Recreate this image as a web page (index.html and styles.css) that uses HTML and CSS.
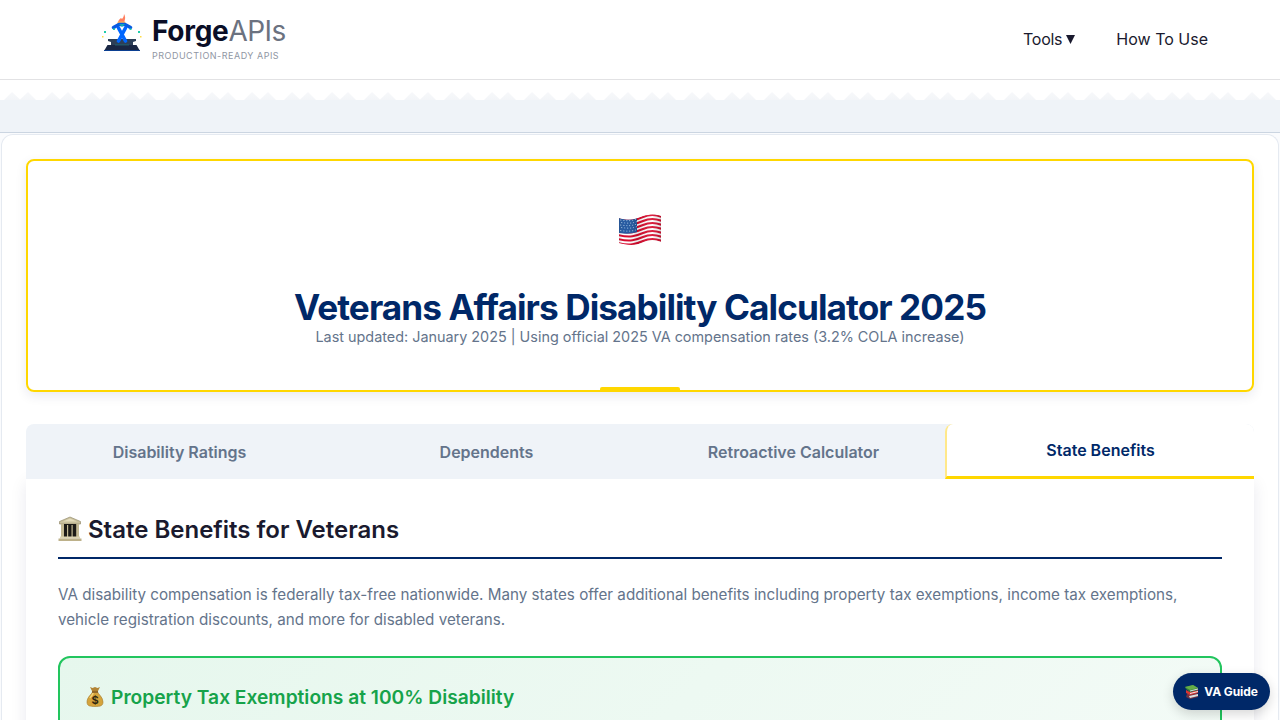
FILE: index.html
```html
<!DOCTYPE html>
<html lang="en">
<head>
<meta charset="utf-8">
<title>Veterans Affairs Disability Calculator 2025</title>
<link rel="stylesheet" href="styles.css">
</head>
<body>
<header class="header">
  <div class="brand">
    <svg class="brand-icon" viewBox="0 0 44 40" width="44" height="40">
      <path d="M7.500 31h29l3.500 6H4z" fill="#1a2744"/>
      <path d="M4 36h36v1H4z" fill="#0b3f91"/>
      <path d="M8 25h28v2l-3 1v3H11v-3l-3-1z" fill="#2d3f58"/>
      <path d="M15 30h14v1.500H15z" fill="#245566"/>
      <path d="M18 9c0-3 2-4 3-5l1 1c1-1 2-3 2-5 2 4 1 5 0 9z" fill="#ff8060"/>
      <path d="M18 7.500h7l1 2.500h-9z" fill="#ffb45c"/>
      <g fill="none" stroke="#0066ff" stroke-linecap="round" stroke-linejoin="round" stroke-width="3.600">
        <path d="M18.500 27l7-13M25.500 27l-7-13"/>
        <path d="M13.500 13.500l5.500-3h6l5.500 3" stroke="#075be3"/>
      </g>
      <path d="M19 10h6l-3 3z" fill="#10a9b5"/>
      <path d="M13 14.500h2v1.500h-2zM29.500 14.500h2v1.500h-2zM4 17h2v2H4zM38 17h2v2h-2z" fill="#20ccaa"/>
      <path d="M2 22h1.500v1.500H2zM40 22h1.500v1.500H40z" fill="#ffdc45"/>
    </svg>
    <div class="brand-copy">
      <div class="brand-name"><b>Forge</b><span>APIs</span></div>
      <div class="brand-tagline">PRODUCTION-READY APIS</div>
    </div>
  </div>
  <nav class="nav"><a>Tools <svg width="9" height="9" viewBox="0 0 9 9"><path d="M0 0h9L4.500 9z" fill="#1a1a2e"/></svg></a><a>How To Use</a></nav>
</header>
<div class="divider">
  <svg class="teeth" width="1280" height="8">
    <defs>
      <linearGradient id="fade" x1="0" y1="0" x2="0" y2="1"><stop stop-color="#f7f8fa"/><stop offset="1" stop-color="#f3f5f8"/></linearGradient>
      <pattern id="saw" width="40" height="8" patternUnits="userSpaceOnUse"><path d="M4 8l8-8 8 7.500L28 0l8 8z" fill="url(#fade)"/></pattern>
    </defs>
    <rect width="1280" height="8" fill="url(#saw)"/>
  </svg>
</div>
<div class="band"></div>
<main class="container">
  <section class="hero">
    <svg class="flag" width="44" height="32" viewBox="0 0 44 32">
      <defs>
        <clipPath id="flag-shape"><path d="M1 4C12 7 18 5 25 2 32 0 38 0 43 2v26c-7-2-12-2-19 1-8 3-16 2-23 0z"/></clipPath>
        <linearGradient id="flag-light"><stop stop-color="#000" stop-opacity=".12"/><stop offset=".15" stop-color="#fff" stop-opacity="0"/><stop offset=".42" stop-color="#000" stop-opacity=".1"/><stop offset=".75" stop-color="#fff" stop-opacity=".1"/><stop offset="1" stop-color="#000" stop-opacity=".18"/></linearGradient>
      </defs>
      <g clip-path="url(#flag-shape)">
        <path d="M0 0h44v32H0z" fill="#fff"/>
        <g fill="none" stroke="#d8092c" stroke-width="2.050">
          <path d="M0 5C12 8 18 6 25 3s14-2 19 0"/>
          <path d="M0 9C12 12 18 10 25 7s14-2 19 0"/>
          <path d="M0 13C12 16 18 14 25 11s14-2 19 0"/>
          <path d="M0 17C12 20 18 18 25 15s14-2 19 0"/>
          <path d="M0 21C12 24 18 22 25 19s14-2 19 0"/>
          <path d="M0 25C12 28 18 26 25 23s14-2 19 0"/>
          <path d="M0 29C12 32 18 30 25 27s14-2 19 0"/>
        </g>
        <path d="M1 4c8 2 13 2 18 0v14c-6 2-11 2-18 1z" fill="#2459a0"/>
        <g fill="none" stroke="#8fb2d8" stroke-dasharray="1.200 1.800" stroke-width="1">
          <path d="M2 6c7 1 12 1 17-1M3 8.500c7 1 11 1 16-1M2 11c7 1 12 1 17-1M3 13.500c7 1 11 1 16-1M2 16.500c7 1 12 1 17-1"/>
        </g>
        <path d="M0 0h44v32H0z" fill="url(#flag-light)"/>
      </g>
    </svg>
    <h1 class="title">Veterans Affairs Disability Calculator 2025</h1>
    <p class="updated">Last updated: January 2025 | Using official 2025 VA compensation rates (3.2% COLA increase)</p>
    <i class="hero-accent"></i>
  </section>
  <div class="tabs">
    <button class="tab">Disability Ratings</button><button class="tab">Dependents</button><button class="tab">Retroactive Calculator</button><button class="tab tab-active">State Benefits</button>
  </div>
  <section class="panel">
    <h2 class="panel-title">
      <svg width="24" height="26" viewBox="0 0 24 26">
        <path d="M12 1L1.500 5.500V8h21V5.500z" fill="#c9c09d" stroke="#968e70" stroke-width=".7"/>
        <path d="M5 5.500l7-3 7 3z" fill="#e4dcbc"/>
        <path d="M3.500 8h17v13h-17z" fill="#1c1a17"/>
        <path d="M3 8h3v13H3zM9 9h1.200v12H9zM13.500 9h1.200v12h-1.200zM18.200 8H21v13h-2.800z" fill="#c4b994"/>
        <path d="M2 20.500h20v2H2z" fill="#ded5b4"/><path d="M.5 22.500h23V25H.5z" fill="#bdb18a"/>
      </svg>
      <span>State Benefits for Veterans</span>
    </h2>
    <p class="intro">VA disability compensation is federally tax-free nationwide. Many states offer additional benefits including property tax exemptions, income tax exemptions, vehicle registration discounts, and more for disabled veterans.</p>
    <div class="benefit">
      <h3 class="benefit-title">
        <svg width="18" height="22" viewBox="0 0 18 22">
          <path d="M4 1l2.500 1L9 1l2.500 1L14 1l-2.500 5h-5z" fill="#b28435"/>
          <path d="M7 5h4c1 3 6 6 6 11 0 4-3 4.500-8 4.500S1 20 1 16C1 11 6 8 7 5z" fill="#d5a43c" stroke="#a57a2c" stroke-width=".6"/>
          <path d="M4 12c1-2 3-3 3-5" stroke="#f2d477" stroke-width="1.500" fill="none"/>
          <path d="M6 6h6" stroke="#805922" stroke-width="1.500"/>
          <text class="dollar" x="9" y="18" text-anchor="middle">$</text>
        </svg>
        <span>Property Tax Exemptions at 100% Disability</span>
      </h3>
    </div>
  </section>
</main>
<button class="guide">
  <svg width="14" height="15" viewBox="0 0 14 15">
    <path d="M2 10l9-1 2 1v3l-8 2-4-2z" fill="#723342"/><path d="M4 12l9-2v2l-8 2z" fill="#ddd"/>
    <path d="M1 6l4 2 8-2v3l-8 2-4-2z" fill="#d83632"/><path d="M5 9l8-2v1l-8 2z" fill="#eee"/>
    <path d="M0 3l8-2 5 3v2L5 8 1 5z" fill="#36803b"/><path d="M0 3l8-2 5 3-8 2z" fill="#65ad48"/><path d="M5 6.500l8-2v1l-8 2z" fill="#ddd"/>
  </svg><span>VA Guide</span>
</button>
</body>
</html>
```
FILE: styles.css
```css
* { box-sizing: border-box; }
html { height: 720px; overflow: hidden; }
body { display: flex; flex-direction: column; margin: 0; height: 720px; overflow: hidden; background: #fafbfd; color: #1a1a2e; font-family: Inter, "Liberation Sans", sans-serif; }
h1, h2, h3, p { margin: 0; }
button { font-family: inherit; }
.header { display: flex; flex: none; justify-content: space-between; align-items: flex-start; height: 80px; padding: 14px 72px 0 100px; border-bottom: 1px solid #e2e2e4; background: #fff; }
.brand { display: flex; gap: 8px; }
.brand-name { display: flex; font-size: 28px; line-height: 34px; }
.brand-name b { color: #0a0e27; font-weight: 700; letter-spacing: -.28px; }
.brand-name span { color: #6b7280; font-weight: 400; letter-spacing: -.6px; }
.brand-tagline { margin-top: 2px; color: #9096a3; font-size: 9px; line-height: 11px; letter-spacing: .5px; }
.nav { display: flex; gap: 41px; padding-top: 15px; font-size: 16px; line-height: 20px; }
.nav svg { margin-left: 0; vertical-align: 1px; }
.nav a:first-child { letter-spacing: -.3px; }
.divider { display: flex; flex: none; align-items: flex-end; height: 20px; background: #fff; }
.teeth { display: block; }
.band { flex: none; height: 33px; background: #eff3f8; border-bottom: 1px solid #cbd5e1; }
.container { flex: 1; min-height: 0; margin: 1px 1px 0; padding: 24px 24px 0; overflow: hidden; background: #fff; border: 1px solid #e5eaf1; border-bottom: 0; border-radius: 12px 12px 0 0; }
.hero { position: relative; display: flex; flex-direction: column; align-items: center; height: 233px; padding-top: 53px; border: 2px solid #ffd700; border-radius: 8px; box-shadow: 0 4px 12px rgba(0, 20, 80, .09); }
.title { margin-top: 40px; color: #002868; font-size: 35.2px; font-weight: 700; line-height: 42px; letter-spacing: -.93px; white-space: nowrap; }
.updated { color: #64748b; font-size: 14.4px; line-height: 17px; }
.hero-accent { position: absolute; bottom: -1px; left: calc(50% - 40px); width: 80px; height: 4px; border-radius: 2px 2px 0 0; background: #ffd700; }
.tabs { position: relative; display: grid; grid-template-columns: repeat(4, 1fr); height: 55px; margin-top: 32px; border-radius: 8px 8px 0 0; overflow: hidden; background: #eff3f8; }
.tab { padding: 1px 0 0; border: 0; background: transparent; color: #64748b; font-size: 16px; font-weight: 600; }
.tab-active { margin-left: -2px; padding: 0; background: #fff; border: 1px solid #ffe88a; border-width: 0 0 3px 2px; border-bottom-color: #ffd700; border-radius: 8px 8px 0 0; color: #002868; }
.panel { height: 400px; padding: 32px; background: #fff; box-shadow: 0 4px 16px rgba(0, 20, 80, .09); }
.panel-title { display: flex; align-items: flex-start; gap: 6px; height: 48px; padding-top: 5px; border-bottom: 2px solid #002868; font-size: 24px; font-weight: 600; line-height: 28px; }
.intro { margin-top: 23px; color: #64748b; font-size: 15.2px; line-height: 25px; letter-spacing: .008px; }
.benefit { height: 180px; margin-top: 24px; padding: 28px 26px; border: 2px solid #22c55e; border-radius: 12px; background: linear-gradient(135deg, #e6f7ed, #f4fbf7); }
.benefit-title { display: flex; gap: 7px; color: #16a34a; font-size: 19.2px; font-weight: 600; line-height: 22px; }
.dollar { font: bold 11px Inter, sans-serif; fill: #30280f; }
.guide { position: absolute; left: 1173px; top: 673px; display: flex; align-items: center; justify-content: center; gap: 5px; width: 97px; height: 37px; padding: 0; border: 0; border-radius: 19px; background: #002868; color: #fff; font-size: 12px; font-weight: 700; letter-spacing: -.1px; box-shadow: 0 4px 12px rgba(0, 0, 0, .16); }
```
